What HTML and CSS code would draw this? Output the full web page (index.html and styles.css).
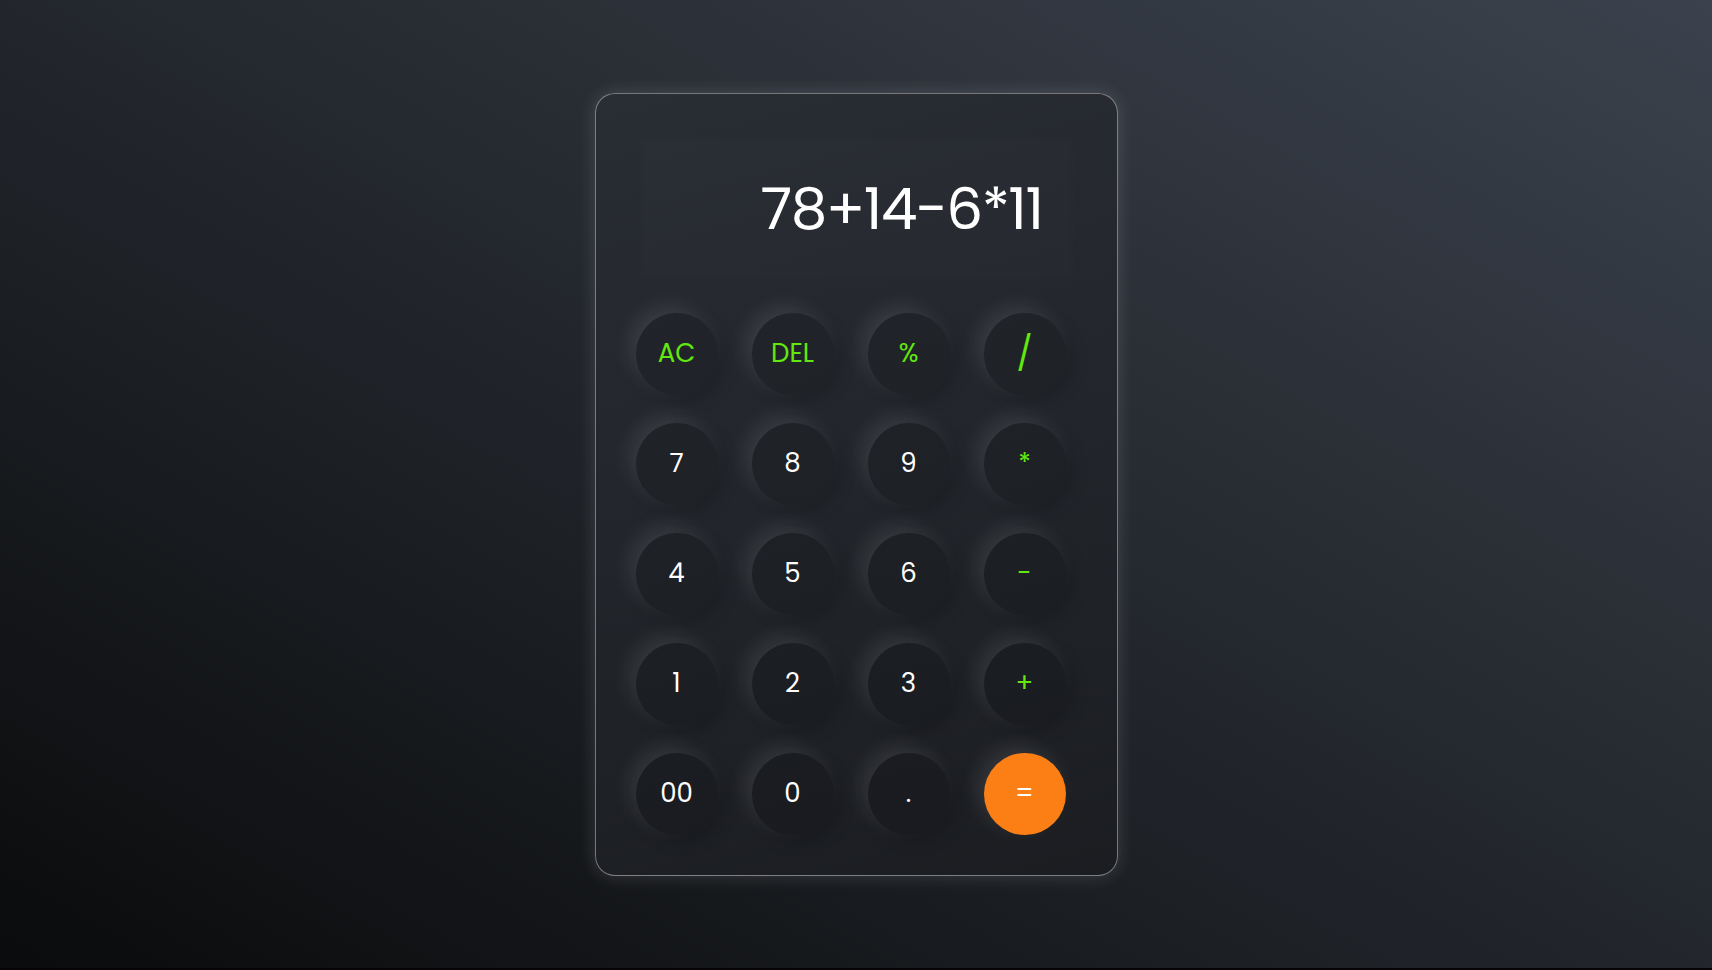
FILE: index.html
```html
<!doctype html>
<html>
	<head>
		<title>Calculator</title>
		<meta charset="utf8">
		<link rel="stylesheet" href="styles.css">
	</head>
	<body>
		<div class="calculator">
			<div class="display">78+14-6*11</div>
			<div class="keys">
				<button class="key op">AC</button>
				<button class="key op">DEL</button>
				<button class="key op">%</button>
				<button class="key op slash">/</button>
				<button class="key">7</button>
				<button class="key">8</button>
				<button class="key">9</button>
				<button class="key op">*</button>
				<button class="key">4</button>
				<button class="key">5</button>
				<button class="key">6</button>
				<button class="key op">-</button>
				<button class="key">1</button>
				<button class="key">2</button>
				<button class="key">3</button>
				<button class="key op">+</button>
				<button class="key">00</button>
				<button class="key">0</button>
				<button class="key">.</button>
				<button class="key equal">=</button>
			</div>
		</div>
	</body>
</html>
```

FILE: styles.css
```css
* {
	margin: 0;
	padding: 0;
	box-sizing: border-box;
}
html {
	background-color: #050506;
}
body {
	height: 968px;
	display: flex;
	justify-content: center;
	align-items: center;
	background: linear-gradient(to top right, #0a0b0c, #3b424d);
	font-family: "Poppins", Inter, sans-serif;
}
.calculator {
	width: 523px;
	padding: 40px;
	border: 1px solid rgba(255, 255, 255, 0.4);
	border-radius: 20px;
	background: linear-gradient(165deg, #292d34, #1b1d21);
	box-shadow: 0 0 18px rgba(255, 255, 255, 0.15);
}
.display {
	height: 150px;
	padding-right: 34px;
	display: flex;
	align-items: center;
	justify-content: flex-end;
	color: #fff;
	font-size: 58px;
	letter-spacing: -1.5px;
	background: rgba(255, 255, 255, 0.01);
	box-shadow: inset 0 0 8px rgba(0, 0, 0, 0.1);
}
.keys {
	margin-top: 29px;
	display: grid;
	grid-template-columns: repeat(4, 82px);
	column-gap: 34px;
	row-gap: 28px;
}
.key {
	width: 82px;
	height: 82px;
	border-radius: 50%;
	border: 0;
	background: rgba(0, 0, 0, 0.1);
	color: #fff;
	font-family: inherit;
	font-size: 26px;
	box-shadow:
		-7px -7px 20px rgba(255, 255, 255, 0.1),
		6px 6px 18px rgba(0, 0, 0, 0.2);
}
.op {
	color: #62e80f;
}
.slash {
	font-size: 34px;
}
.equal {
	background-color: #fc7f16;
	box-shadow: -7px -7px 20px rgba(255, 255, 255, 0.1);
}
```
